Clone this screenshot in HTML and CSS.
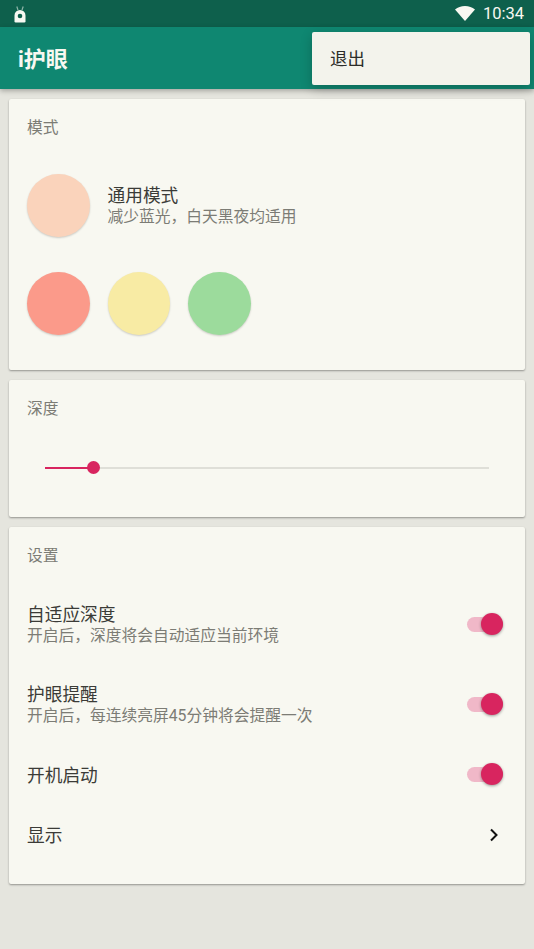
FILE: index.html
```html
<!DOCTYPE html>
<html lang="zh">
<head>
<meta charset="utf-8">
<title>i护眼</title>
<link rel="stylesheet" href="styles.css">
</head>
<body>
<div class="status">
  <svg class="robot" width="14" height="17" viewBox="0 0 14 17"><path d="M3.800 .5 5 4M10.200 .5 9 4" stroke="#8fb5a8" stroke-width="1.200" fill="none"/><path d="M1.500 16V9.500a5.500 5.500 0 0 1 11 0V16l-1 .5h-9z" fill="#f8f8f1"/><circle cx="7" cy="10" r="2.300" fill="#0e604c"/></svg>
  <div class="status-right">
    <svg width="20" height="15" viewBox="0 0 20 15"><path d="M0 3.600C2.700 1.300 6.200 0 10 0s7.300 1.300 10 3.600L10 15z" fill="#f8f8f1"/></svg>
    <span class="clock">10:34</span>
  </div>
</div>
<header class="appbar"><h1 class="title">i护眼</h1></header>
<div class="menu"><span class="menu-item">退出</span></div>
<main class="content">
  <section class="card card-mode">
    <h2 class="label">模式</h2>
    <div class="mode-current">
      <span class="dot dot-peach"></span>
      <div class="texts">
        <div class="name">通用模式</div>
        <div class="desc">减少蓝光，白天黑夜均适用</div>
      </div>
    </div>
    <div class="mode-options">
      <span class="dot dot-red"></span>
      <span class="dot dot-yellow"></span>
      <span class="dot dot-green"></span>
    </div>
  </section>
  <section class="card card-depth">
    <h2 class="label">深度</h2>
    <div class="slider"><span class="slider-fill"></span><span class="slider-knob"></span></div>
  </section>
  <section class="card card-settings">
    <h2 class="label">设置</h2>
    <div class="row row-two">
      <div class="texts">
        <div class="name">自适应深度</div>
        <div class="desc">开启后，深度将会自动适应当前环境</div>
      </div>
      <span class="switch"><span class="switch-knob"></span></span>
    </div>
    <div class="row row-two">
      <div class="texts">
        <div class="name">护眼提醒</div>
        <div class="desc">开启后，每连续亮屏45分钟将会提醒一次</div>
      </div>
      <span class="switch"><span class="switch-knob"></span></span>
    </div>
    <div class="row row-one">
      <div class="name">开机启动</div>
      <span class="switch"><span class="switch-knob"></span></span>
    </div>
    <div class="row row-one">
      <div class="name">显示</div>
      <svg class="chevron" width="10" height="14" viewBox="0 0 10 14"><path d="M2 1.500 7.500 7 2 12.500" fill="none" stroke="#111" stroke-width="2"/></svg>
    </div>
  </section>
</main>
</body>
</html>
```
FILE: styles.css
```css
* { box-sizing: border-box; }
html, body { margin: 0; padding: 0; }
body {
  width: 534px;
  height: 949px;
  overflow: hidden;
  position: relative;
  background: #e5e5de;
  font-family: "Roboto", "Noto Sans CJK SC", sans-serif;
  color: #3b3b37;
}
.status {
  height: 27px;
  background: #0e604c;
  display: flex;
  align-items: center;
  justify-content: space-between;
  padding: 0 10px 0 13px;
}
.status-right { display: flex; align-items: center; gap: 8px; margin-top: -1px; }
.clock { color: #f8f8f1; font-size: 16.500px; line-height: 27px; }
.robot { margin-top: 1px; }
.appbar {
  height: 62px;
  background: #0f8771;
  padding: 0 0 3px 18px;
  display: flex;
  align-items: center;
  box-shadow: 0 2px 5px rgba(0,0,0,.28);
  position: relative;
}
.title { margin: 0; font-size: 22px; font-weight: 700; color: #f8f8f1; }
.menu {
  position: absolute;
  left: 312px;
  top: 32px;
  width: 218px;
  height: 53px;
  padding: 0 0 3px 18px;
  display: flex;
  align-items: center;
  background: #f3f3ec;
  border-radius: 2px;
  font-size: 17.500px;
  color: #2c2c29;
  box-shadow: 0 4px 12px rgba(0,0,0,.22);
}
.content {
  padding: 10px 9px 0;
  display: flex;
  flex-direction: column;
  gap: 10px;
}
.card {
  background: #f8f8f1;
  border-radius: 2px;
  box-shadow: 0 1px 2px rgba(0,0,0,.36);
}
.label {
  margin: 0;
  font-size: 15.750px;
  font-weight: 400;
  line-height: 22px;
  color: #7c7c75;
}
.card-mode { height: 271px; padding: 18px 18px 0; }
.card-depth { height: 137px; padding: 18px 18px 0; }
.card-settings { height: 357px; padding: 18px 19px 0 18px; }
.mode-current {
  display: flex;
  align-items: center;
  gap: 18px;
  margin-top: 35px;
}
.mode-options { display: flex; gap: 18px; margin-top: 35px; }
.dot {
  display: block;
  flex: none;
  width: 62.500px;
  height: 63px;
  border-radius: 50%;
  box-shadow: 0 1px 2px rgba(0,0,0,.18);
}
.dot-peach { background: #fad3bb; }
.dot-red { background: #fb9a8a; }
.dot-yellow { background: #f8eba4; }
.dot-green { background: #9cdb9c; }
.name { font-size: 17.700px; line-height: 21px; color: #3b3b37; position: relative; top: 1px; }
.desc { font-size: 15.750px; line-height: 21px; color: #7c7c75; }
.texts { display: flex; flex-direction: column; }
.slider {
  position: relative;
  height: 2px;
  margin: 47px 18px 0;
  background: #dfdfd8;
}
.slider-fill { position: absolute; left: 0; top: 0; height: 2px; width: 48px; background: #d8255f; }
.slider-knob {
  position: absolute;
  left: 42px;
  top: -6px;
  width: 13px;
  height: 13px;
  border-radius: 50%;
  background: #d8255f;
}
.row { display: flex; align-items: center; justify-content: space-between; }
.row-two { height: 80px; }
.card-settings .label + .row { margin-top: 18px; }
.row-one { height: 60px; }
.switch {
  position: relative;
  display: block;
  width: 36px;
  height: 15px;
  margin: -2px 3px 0 0;
  border-radius: 8px;
  background: #f0b8c8;
}
.switch-knob {
  position: absolute;
  right: 0;
  top: -4px;
  width: 22px;
  height: 22px;
  border-radius: 50%;
  background: #d8255f;
  box-shadow: 0 1px 3px rgba(0,0,0,.38);
}
.chevron { margin-right: 7px; }
```
